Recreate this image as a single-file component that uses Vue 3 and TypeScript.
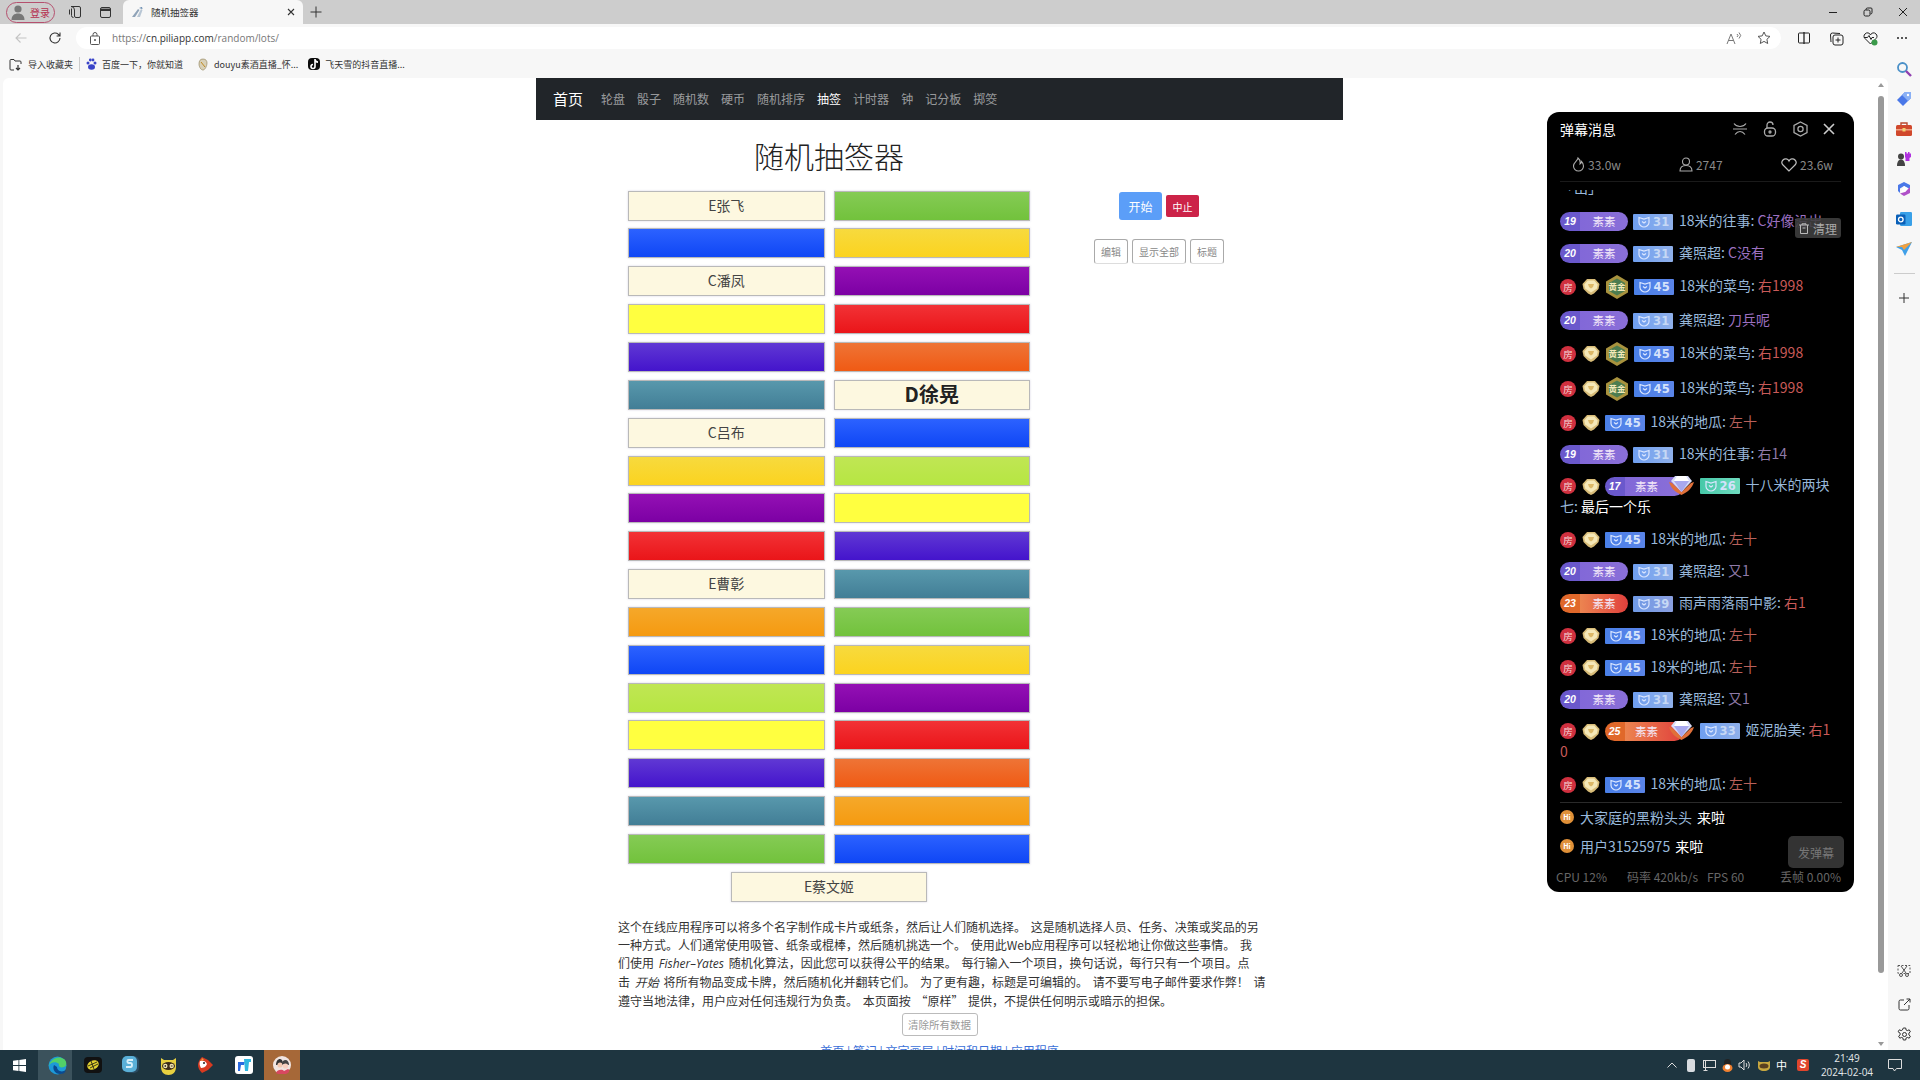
<script setup lang="ts">
type Col = 'cream' | 'green' | 'blue' | 'gold' | 'purple' | 'yellow' | 'red' | 'indigo' | 'orange' | 'teal' | 'lime' | 'amber'
interface Card { c: Col; t?: string; big?: boolean }
const c = (x: Col, t?: string, big?: boolean): Card => ({ c: x, t, big })
const cards: Card[] = [
  c('cream', 'E张飞'), c('green'), c('blue'), c('gold'), c('cream', 'C潘凤'), c('purple'),
  c('yellow'), c('red'), c('indigo'), c('orange'), c('teal'), c('cream', 'D徐晃', true),
  c('cream', 'C吕布'), c('blue'), c('gold'), c('lime'), c('purple'), c('yellow'),
  c('red'), c('indigo'), c('cream', 'E曹彰'), c('teal'), c('amber'), c('green'),
  c('blue'), c('gold'), c('lime'), c('purple'), c('yellow'), c('red'),
  c('indigo'), c('orange'), c('teal'), c('amber'), c('green'), c('blue')
]
const navLinks = ['轮盘', '骰子', '随机数', '硬币', '随机排序', '抽签', '计时器', '钟', '记分板', '掷筊']

interface Row {
  h: number; room?: boolean; medal?: boolean; lvl?: string; hot?: boolean; gem?: boolean
  fan: string; fanCls: string; name: string; msg: string; msgCls: string; two?: boolean
}
const suSu = (lvl: string, fan: string, name: string, msg: string, msgCls: string, hot = false): Row =>
  ({ h: 32, lvl, fan, fanCls: hot ? 'f-mid' : 'f-light', name, msg, msgCls, hot })
const caiNiao = (): Row =>
  ({ h: 35, room: true, medal: true, fan: '45', fanCls: 'f-deep', name: '18米的菜鸟', msg: '右1998', msgCls: 'm-red' })
const diGua = (): Row =>
  ({ h: 32, room: true, fan: '45', fanCls: 'f-deep', name: '18米的地瓜', msg: '左十', msgCls: 'm-rust' })
const rows: Row[] = [
  suSu('19', '31', '18米的往事', 'C好像没出', 'm-purple'),
  suSu('20', '31', '龚照超', 'C没有', 'm-purple'),
  caiNiao(),
  suSu('20', '31', '龚照超', '刀兵呢', 'm-purple'),
  caiNiao(),
  caiNiao(),
  diGua(),
  suSu('19', '31', '18米的往事', '右14', 'm-mauve'),
  { h: 53, two: true, room: true, lvl: '17', gem: true, fan: '26', fanCls: 'f-teal', name: '十八米的两块七', msg: '最后一个乐', msgCls: 'm-white' },
  diGua(),
  suSu('20', '31', '龚照超', '又1', 'm-mauve'),
  suSu('23', '39', '雨声雨落雨中影', '右1', 'm-red', true),
  diGua(),
  diGua(),
  suSu('20', '31', '龚照超', '又1', 'm-mauve'),
  { h: 53, two: true, room: true, lvl: '25', hot: true, gem: true, fan: '33', fanCls: 'f-light', name: '姬泥胎美', msg: '右10', msgCls: 'm-red' },
  diGua()
]
const sideTop = ['search', 'tag', 'box', 'chess', 'copilot', 'outlook', 'send']
</script>

<template>
  <div class="screen">
    <div class="tabbar">
      <div class="profile">
        <svg width="16" height="16" viewBox="0 0 16 16"><circle cx="8" cy="5" r="3.6" fill="#777"/><path d="M1.5 16c0-4.5 3-6.5 6.5-6.5s6.500 2 6.500 6.500z" fill="#777"/></svg>
        <span>登录</span>
      </div>
      <svg class="tb-ic1" width="14" height="14" viewBox="0 0 14 14" fill="none" stroke="#333"><path d="M5 1.500h6a1.500 1.500 0 0 1 1.500 1.500v8a1.500 1.500 0 0 1-1.500 1.500H8a1.500 1.500 0 0 1-1.500-1.500V5A3.500 3.500 0 0 0 3 1.500z"/><path d="M3.500 3.500v7a2 2 0 0 0 2 2M1.500 4.500v5"/></svg>
      <svg class="tb-ic2" width="13" height="13" viewBox="0 0 13 13" fill="none" stroke="#333"><rect x="1.500" y="1.500" width="10" height="10" rx="1.500"/><path d="M1.500 3.800h10" stroke-width="2.400"/></svg>
      <div class="tab">
        <svg width="13" height="13" viewBox="0 0 13 13"><path d="M1 11 7 3l1.500 1L4 11z" fill="#8fa3b8"/><path d="M6 11l4-8 1.500 1L9 11z" fill="#b8c6d4"/><path d="M8 2l3-1 .5 2z" fill="#5a80a8"/></svg>
        <span class="tab-title">随机抽签器</span>
        <svg class="tab-x" width="8" height="8" viewBox="0 0 8 8" stroke="#333" stroke-width="1.100"><path d="M1 1l6 6M7 1 1 7"/></svg>
      </div>
      <svg class="tab-plus" width="12" height="12" viewBox="0 0 12 12" stroke="#333"><path d="M6 .5v11M.5 6h11"/></svg>
      <div class="winctl">
        <svg width="10" height="10" viewBox="0 0 10 10" stroke="#222"><path d="M1 5.500h8"/></svg>
        <svg width="10" height="10" viewBox="0 0 10 10" stroke="#222" fill="none"><rect x="1" y="3" width="6" height="6" rx="1.500"/><path d="M3 3V2.500A1.500 1.500 0 0 1 4.500 1H8a1 1 0 0 1 1 1v3.500A1.500 1.500 0 0 1 7.500 7"/></svg>
        <svg width="10" height="10" viewBox="0 0 10 10" stroke="#222"><path d="M1 1l8 8M9 1 1 9"/></svg>
      </div>
    </div>

    <div class="toolbar">
      <svg class="t-back" width="12" height="12" viewBox="0 0 12 12" fill="none" stroke="#c4c4c4" stroke-width="1.100"><path d="M11.500 6H1M5.500 1.500 1 6l4.500 4.500"/></svg>
      <svg class="t-reload" width="14" height="14" viewBox="0 0 14 14" fill="none" stroke="#333" stroke-width="1.100"><path d="M12 7a5 5 0 1 1-1.600-3.700L12 5M12 1.500V5H8.600"/></svg>
      <div class="address">
        <svg width="10" height="13" viewBox="0 0 10 13" fill="none" stroke="#555"><rect x=".5" y="4" width="9" height="8.500" rx="1"/><path d="M3 4V2.500a2 2 0 0 1 4 0V4"/><circle cx="5" cy="8" r=".6" fill="#555"/></svg>
        <span class="url"><i>https://</i>cn.piliapp.com<i>/random/lots/</i></span>
        <svg class="a-read" width="16" height="13" viewBox="0 0 16 13" fill="none" stroke="#777"><path d="M1 12 5 2l4 10M2.500 8.500h5M11 2l1 1.500-1 1.500M13 .5l1.700 3-1.700 3"/></svg>
        <svg class="a-star" width="14" height="14" viewBox="0 0 14 14" fill="none" stroke="#555"><path d="M7 1l1.800 3.900 4.200.5-3.100 2.900.8 4.200L7 10.400l-3.700 2.100.8-4.200L1 5.400l4.200-.5z"/></svg>
      </div>
      <div class="t-right">
        <svg width="14" height="14" viewBox="0 0 14 14" fill="none" stroke="#222"><rect x="1.500" y="2" width="11" height="10" rx="1"/><path d="M7 1v12" stroke-width="1.300"/></svg>
        <svg width="15" height="15" viewBox="0 0 15 15" fill="none" stroke="#222"><rect x="4" y="4" width="10" height="10" rx="2"/><path d="M9 6.500v5M6.500 9h5M11 2.500 3.500 2A2 2 0 0 0 1.500 4l.5 7"/></svg>
        <svg width="15" height="15" viewBox="0 0 15 15" fill="none" stroke="#222"><path d="M7.500 13 2 7.500a3 3 0 0 1 0-4.500 3.200 3.200 0 0 1 5.500 1 3.200 3.200 0 0 1 5.500-1 3 3 0 0 1 0 4.500z"/><path d="M1 6.500h3.500l1.500-2 2 4 1-2h2"/><circle cx="11.500" cy="11.500" r="3" fill="#3a9a4a" stroke="none"/></svg>
        <svg width="12" height="12" viewBox="0 0 12 12" fill="#222"><circle cx="2" cy="6" r="1"/><circle cx="6" cy="6" r="1"/><circle cx="10" cy="6" r="1"/></svg>
      </div>
    </div>

    <div class="body">
      <div class="left">
        <div class="bookmarks">
          <svg class="bm-first" width="14" height="13" viewBox="0 0 14 13" fill="none" stroke="#333"><path d="M5 12H2a1 1 0 0 1-1-1V2.500a1 1 0 0 1 1-1h3l1 1.500h5a1 1 0 0 1 1 1V6"/><path d="M9 7v5M7 10l2 2 2-2" stroke-width="1.200"/></svg>
          <span class="bm-t">导入收藏夹</span>
          <i class="bm-sep"></i>
          <svg width="11" height="12" viewBox="0 0 11 12" fill="#3a44c8"><circle cx="2" cy="5" r="1.500"/><circle cx="4.300" cy="2" r="1.400"/><circle cx="7" cy="2" r="1.400"/><circle cx="9" cy="5" r="1.500"/><ellipse cx="5.500" cy="9" rx="3.500" ry="2.800"/></svg>
          <span class="bm-t">百度一下，你就知道</span>
          <svg class="bm-gap" width="12" height="13" viewBox="0 0 12 13"><path d="M6 1c3 0 4 2 4 4 0 3-2 7-4 7S2 9 2 6c0-3 1-5 4-5z" fill="#d8d0b8" stroke="#8a7a50" stroke-width=".6"/><path d="M4 4l4 5" stroke="#c08a20"/></svg>
          <span class="bm-t">douyu素酒直播_怀...</span>
          <span class="bm-tt"><svg width="9" height="11" viewBox="0 0 9 11" fill="none" stroke="#fff" stroke-width="1.600"><path d="M5 0v7.500a2 2 0 1 1-2-2M5 .5c.3 1.500 1.500 2.500 3 2.600"/></svg></span>
          <span class="bm-t">飞天雪的抖音直播...</span>
        </div>

        <div class="page">
          <div class="content">
            <nav class="navbar">
              <span class="brand">首页</span>
              <span v-for="n in navLinks" :key="n" class="nav-a" :class="{ active: n === '抽签' }">{{ n }}</span>
            </nav>
            <div class="board">
              <div class="lots-col">
                <h1 class="title">随机抽签器</h1>
                <div class="lots">
                  <div v-for="(k, i) in cards" :key="i" class="card" :class="[k.c, { big: k.big }]">{{ k.t }}</div>
                  <div class="card cream last">E蔡文姬</div>
                </div>
              </div>
              <div class="controls">
                <div class="ctl-a">
                  <button class="b-start">开始</button>
                  <button class="b-stop">中止</button>
                </div>
                <div class="ctl-b">
                  <button class="b-out w34">编辑</button>
                  <button class="b-out w54">显示全部</button>
                  <button class="b-out w34">标题</button>
                </div>
              </div>
            </div>
            <p class="desc">这个在线应用程序可以将多个名字制作成卡片或纸条，然后让人们随机选择。 这是随机选择人员、任务、决策或奖品的另<br>一种方式。人们通常使用吸管、纸条或棍棒，然后随机挑选一个。 使用此Web应用程序可以轻松地让你做这些事情。 我<br>们使用 <em>Fisher–Yates</em> 随机化算法，因此您可以获得公平的结果。 每行输入一个项目，换句话说，每行只有一个项目。点<br>击 <em>开始</em> 将所有物品变成卡牌，然后随机化并翻转它们。 为了更有趣，标题是可编辑的。 请不要写电子邮件要求作弊！ 请<br>遵守当地法律，用户应对任何违规行为负责。 本页面按 “原样” 提供，不提供任何明示或暗示的担保。</p>
            <div class="clear-wrap"><button class="b-clear">清除所有数据</button></div>
            <div class="foot-links">首页 | 笔记 | 文字画层 | 时间和日期 | 应用程序</div>
          </div>

          <div class="scrollbar">
            <i class="arrow up"></i>
            <i class="thumb"></i>
            <i class="arrow down"></i>
          </div>

          <aside class="panel">
            <div class="p-head">
              <span class="p-title">弹幕消息</span>
              <div class="p-tools">
                <svg width="16" height="14" viewBox="0 0 16 14" fill="none" stroke="#aaa" stroke-width="1.200"><path d="M2 1.500c1.500 2 3 3 6 3s4.500-1 6-3M1 7h14M3 12.500c1.500-2 3-3 5-3s3.500 1 5 3"/></svg>
                <svg width="14" height="16" viewBox="0 0 14 16" fill="none" stroke="#aaa" stroke-width="1.300"><rect x="1.500" y="7" width="11" height="8" rx="3.500"/><path d="M4 7V4a3 3 0 0 1 6 0"/><circle cx="7" cy="11" r="1"/></svg>
                <svg width="15" height="16" viewBox="0 0 15 16" fill="none" stroke="#aaa" stroke-width="1.300"><path d="M7.500 1 14 4.500v7L7.500 15 1 11.500v-7z"/><circle cx="7.500" cy="8" r="2.600"/></svg>
                <svg width="12" height="12" viewBox="0 0 12 12" stroke="#ccc" stroke-width="1.600"><path d="M1 1l10 10M11 1 1 11"/></svg>
              </div>
            </div>
            <div class="p-stats">
              <span class="stat s1"><svg width="13" height="15" viewBox="0 0 13 15" fill="none" stroke="#aaa" stroke-width="1.100"><path d="M6 1c0 2.500-4.500 4-4.500 8a5 5 0 0 0 10 0c0-2-1-3.500-2-4.500 0 1.500-.5 2-1.500 2.500C8.500 4.500 8 2.500 6 1z"/></svg>33.0w</span>
              <span class="stat s2"><svg width="14" height="15" viewBox="0 0 14 15" fill="none" stroke="#aaa" stroke-width="1.100"><circle cx="7" cy="4.500" r="3.500"/><path d="M1 14c0-3.500 2-5.500 6-5.500s6 2 6 5.500z"/></svg>2747</span>
              <span class="stat s3"><svg width="16" height="14" viewBox="0 0 16 14" fill="none" stroke="#bbb" stroke-width="1.200"><path d="M8 13 2 7a3.600 3.600 0 0 1 0-5 3.700 3.700 0 0 1 6 1 3.700 3.700 0 0 1 6-1 3.600 3.600 0 0 1 0 5z"/></svg>23.6w</span>
            </div>
            <div class="p-list">
              <div class="clip"><span class="name">「出」</span></div>
              <div v-for="(r, i) in rows" :key="i" class="row" :class="{ two: r.two }" :style="{ height: r.h + 'px', lineHeight: r.two ? '21px' : r.h + 'px' }">
                <span v-if="r.room" class="room">房</span>
                <svg v-if="r.room" class="coin" width="18" height="17" viewBox="0 0 18 17"><path d="M5 1h8l4.500 5-1 5L12 15.500 9 17l-3-1.500L1.500 11l-1-5z" fill="#d8bc78"/><path d="M5.800 2.500h6.400l3.500 4-.8 4L9 14.500 3.100 10.500l-.8-4z" fill="#f5e8b8"/><path d="M6 6h6l-1 3-2 1.500L7 9z" fill="#dcb868"/></svg>
                <svg v-if="r.medal" class="medal" width="24" height="24" viewBox="0 0 24 24"><path d="M12 0 23 6.500v11L12 24 1 17.500v-11z" fill="#a8923e"/><path d="M12 3.500 20 8v8l-8 4.500L4 16V8z" fill="#4c7c50"/><text x="12" y="15" text-anchor="middle" font-size="8.500" font-weight="700" fill="#f3e8b8" font-family="'Noto Sans CJK SC',sans-serif">黄金</text></svg>
                <span v-if="r.lvl" class="lvl-wrap" :class="{ gem: r.gem }">
                  <span class="lvl" :class="{ hot: r.hot }"><b>{{ r.lvl }}</b><span class="lvl-t">素素</span></span>
                  <svg v-if="r.gem" class="diamond" width="25" height="20" viewBox="0 0 25 20"><path d="M0 7c2 6 6 10 12.500 13C19 17 23 13 25 7l-3 1-9.500 9L3 8z" fill="#e0703a"/><path d="M6 1h13l4 5-10.500 11L2 6z" fill="#d8dcf8"/><path d="M8 1l-3 5h15l-3-5z" fill="#fff"/><path d="M5 6h15l-7.500 11z" fill="#a8a8ee"/></svg>
                </span>
                <span class="fan" :class="r.fanCls"><svg width="12" height="12" viewBox="0 0 12 12" fill="none" stroke="#dbe6ff" stroke-width="1.200"><path d="M1 1.500 6 3l5-1.500v5C11 9 8 11 6 11S1 9 1 6.500zM4 5.500l2 1.500 2-1.500"/></svg><b>{{ r.fan }}</b></span>
                <span class="name">{{ r.name }}: </span><span :class="r.msgCls">{{ r.msg }}</span>
              </div>
            </div>
            <div class="p-enter">
              <div class="enter"><i class="hi">Hi</i><span class="name">大家庭的黑粉头头</span><span class="come">来啦</span></div>
              <div class="enter"><i class="hi">Hi</i><span class="name">用户31525975</span><span class="come">来啦</span></div>
            </div>
            <div class="p-foot">
              <span>CPU 12%</span><span class="f2">码率 420kb/s</span><span class="f3">FPS 60</span><span class="f4">丢帧 0.00%</span>
            </div>
            <div class="clean">
              <svg width="10" height="11" viewBox="0 0 10 11" fill="none" stroke="#bbb"><path d="M0 2h10M3 2V.8h4V2M1.500 2v8.500h7V2"/><path d="M3.500 5h3"/></svg>
              清理
            </div>
            <div class="send">发弹幕</div>
          </aside>
        </div>
      </div>

      <div class="side">
        <div v-for="s in sideTop" :key="s" class="side-i">
          <svg v-if="s === 'search'" width="16" height="16" viewBox="0 0 16 16" fill="none"><circle cx="6.500" cy="6.500" r="4.500" stroke="#4a90c8" stroke-width="1.800"/><path d="M10 10l5 5" stroke="#9040b0" stroke-width="2.400"/></svg>
          <svg v-else-if="s === 'tag'" width="16" height="16" viewBox="0 0 16 16"><path d="M9 1h6v6l-8 8-6-6z" fill="#4a78e8"/><path d="M9 1h6v6l-3 3-6-6z" fill="#8ab0f5"/><circle cx="12" cy="4" r="1.200" fill="#fff"/></svg>
          <svg v-else-if="s === 'box'" width="16" height="14" viewBox="0 0 16 14"><path d="M5 3V1h6v2" fill="none" stroke="#b84a30" stroke-width="1.400"/><rect y="3" width="16" height="11" rx="1.500" fill="#d0482c"/><rect y="7" width="16" height="1.500" fill="#f0a080"/><rect x="6.500" y="6" width="3" height="3.500" fill="#f3d070"/></svg>
          <svg v-else-if="s === 'chess'" width="16" height="16" viewBox="0 0 16 16"><circle cx="5" cy="5.500" r="3" fill="#444"/><path d="M1 15c0-4 1.500-6.500 4-6.500S9 11 9 15z" fill="#444"/><path d="M9 1h1.500v1.500h1.500V1h1.500v1.500H15V1v5l-1.500 1v3h-4V7L9 6z" fill="#b030e0"/></svg>
          <svg v-else-if="s === 'copilot'" width="16" height="16" viewBox="0 0 16 16"><path d="M8 1 14 4v4L8 5 4 7.500V12L2 10V4z" fill="#4a78e8"/><path d="M14 6v6l-6 3-4-2.500 5-1.500 3-3z" fill="#b050c8"/><path d="M8 5l4 2.500-3 3.500H5z" fill="#fff"/></svg>
          <svg v-else-if="s === 'outlook'" width="16" height="16" viewBox="0 0 16 16"><rect x="4" y="1" width="12" height="14" rx="1.200" fill="#38a0e8"/><rect x="0" y="3.500" width="9.500" height="10" rx="1.200" fill="#0a60b8"/><circle cx="4.800" cy="8.500" r="2.300" fill="none" stroke="#fff" stroke-width="1.300"/></svg>
          <svg v-else width="16" height="14" viewBox="0 0 16 14"><path d="M0 5 16 0 9 14 6 8z" fill="#40a0e8"/><path d="M0 5h6l2 3 8-8z" fill="#f0a040"/></svg>
        </div>
        <i class="side-sep"></i>
        <svg class="side-plus" width="12" height="12" viewBox="0 0 12 12" stroke="#333"><path d="M6 1v10M1 6h10"/></svg>
        <div class="side-bottom">
          <svg class="snip" width="14" height="13" viewBox="0 0 14 13" fill="none" stroke="#555"><path d="M1 1.500h12v8H1z" stroke-dasharray="2 1.500"/><path d="M4 2l5 7M10 2 5 9"/><circle cx="4" cy="11" r="1.500"/><circle cx="10" cy="11" r="1.500"/></svg>
          <svg width="13" height="13" viewBox="0 0 13 13" fill="none" stroke="#333"><path d="M6 2H2.500A1.500 1.500 0 0 0 1 3.500v7A1.500 1.500 0 0 0 2.500 12h7a1.500 1.500 0 0 0 1.500-1.500V7M6 7l6-6M8.500 1H12v3.500"/></svg>
          <svg width="15" height="15" viewBox="0 0 15 15" fill="none" stroke="#333"><path d="M6.300 1h2.400l.4 2 1.200.6 1.900-.8 1.200 2-1.500 1.300v1.800l1.500 1.300-1.200 2-1.900-.8-1.200.6-.4 2H6.300l-.4-2-1.200-.6-1.900.8-1.200-2 1.500-1.300V6.100L1.100 4.800l1.200-2 1.900.8 1.200-.6z"/><circle cx="7.500" cy="7.500" r="2"/></svg>
        </div>
      </div>
    </div>

    <div class="taskbar">
      <div class="tk win"><svg width="13" height="13" viewBox="0 0 13 13" fill="#fff"><path d="M0 1.800 5.500 1v5H0zM6.300.9 13 0v6H6.300zM0 7h5.500v5L0 11.200zM6.300 7H13v6l-6.700-.9z"/></svg></div>
      <div class="tk edge"><svg width="19" height="19" viewBox="0 0 19 19"><circle cx="9.500" cy="9.500" r="9" fill="#1d9ad8"/><path d="M1 10C2 3 10-1 16 3c3 2 3 7 0 8-3 1-6 0-5-3C8 5 2 6 1 10z" fill="#52d068"/><path d="M6 9c-2 4 1 9 6 9 3 0 5-1 6-4-4 3-9 1-9-3z" fill="#0a4a90"/></svg></div>
      <div class="tk after-edge"><svg width="18" height="16" viewBox="0 0 18 16"><rect width="18" height="16" rx="4" fill="#111"/><ellipse cx="9" cy="8" rx="6" ry="4.500" fill="#e0d030" transform="rotate(-25 9 8)"/><path d="M4 9l9-4M6 11l8-4M7 4l3 8" stroke="#111" stroke-width=".8"/></svg></div>
      <div class="tk"><svg width="18" height="18" viewBox="0 0 18 18"><rect x="2" width="15" height="17" rx="5" fill="#2a4a60"/><rect width="15" height="16" rx="5" fill="#5ab0d8"/><path d="M11 4H6.500C5 4 5 7 6.500 7h2c2 0 2 4 0 4H4" fill="none" stroke="#d8f0fa" stroke-width="1.900"/></svg></div>
      <div class="tk"><svg width="19" height="19" viewBox="0 0 19 19"><path d="M2 2l3 2h9l3-2v9c0 5-3 8-7.500 8S2 16 2 11z" fill="#e8d040"/><ellipse cx="9.500" cy="10" rx="6.500" ry="4" fill="#3a2a1a"/><circle cx="6.300" cy="10" r="2.200" fill="#f3e6b0"/><circle cx="12.700" cy="10" r="2.200" fill="#f3e6b0"/><circle cx="6.300" cy="10" r=".9" fill="#333"/><path d="M11.800 10h1.800" stroke="#333"/></svg></div>
      <div class="tk"><svg width="17" height="18" viewBox="0 0 17 18"><path d="M5 1l6 3 5 5-5 5-6 3C2 14 1 11 1 9s1-5 4-8z" fill="#d83a20"/><path d="M3 5c3-1 6 0 7 3-1 3-4 4-6 4-1-2-2-4-1-7z" fill="#fff"/><circle cx="7" cy="7" r="1" fill="#222"/><path d="M5 2l2 2-3 1z" fill="#e8a040"/></svg></div>
      <div class="tk"><svg width="18" height="18" viewBox="0 0 18 18"><rect width="18" height="18" rx="3" fill="#fff"/><path d="M3 6h7l-1 3H6l-1 6H3z" fill="#2a6ae0"/><path d="M9 3h7v3h-2l-1 9h-3z" fill="#30b8e0"/></svg></div>
      <div class="tk active"><svg width="18" height="18" viewBox="0 0 18 18"><circle cx="9" cy="9" r="9" fill="#f0e4e0"/><path d="M3 9c0-4 2-6 4-6s3 2 3 6z" fill="#333"/><circle cx="7" cy="9" r="2.600" fill="#f3c8b0"/><path d="M9 8c0-3 1.500-4 3.500-4S16 6 16 9z" fill="#444"/><circle cx="12.500" cy="10" r="2.600" fill="#f7d0c0"/><path d="M3 17c1-4 7-4 8-2l4-2c2 1 1 3 0 4-3 2-9 2-12 0z" fill="#d84860"/></svg></div>
      <div class="tray">
        <svg class="y1" width="10" height="6" viewBox="0 0 10 6" fill="none" stroke="#ddd"><path d="M.5 5.500 5 1l4.500 4.500"/></svg>
        <svg class="y2" width="8" height="13" viewBox="0 0 8 13"><rect width="8" height="13" rx="2" fill="#d8dce0"/></svg>
        <svg class="y3" width="13" height="12" viewBox="0 0 13 12" fill="none" stroke="#ddd"><rect x=".5" y="1.500" width="12" height="7"/><path d="M2.500 1.500v10M.5 11.500h4"/></svg>
        <svg class="y4" width="11" height="13" viewBox="0 0 11 13"><ellipse cx="5.500" cy="4" rx="3.500" ry="4" fill="#222"/><ellipse cx="5.500" cy="9" rx="5" ry="4" fill="#f08030"/><ellipse cx="5.500" cy="8" rx="2.500" ry="2.500" fill="#fff"/></svg>
        <svg class="y5" width="13" height="12" viewBox="0 0 13 12" fill="none" stroke="#ddd"><path d="M1 4h2l3-3v10L3 8H1zM8 4c1 1 1 3 0 4M10 2.500c1.700 2 1.700 5 0 7"/></svg>
        <svg class="y6" width="14" height="12" viewBox="0 0 14 12"><path d="M1 2l2 1h8l2-1v6c0 2-2 4-6 4S1 10 1 8z" fill="#c8a840"/><ellipse cx="7" cy="7" rx="4.500" ry="2.500" fill="#5a4020"/></svg>
        <span class="zh">中</span>
        <span class="sogou">S</span>
        <div class="clock"><span>21:49</span><span>2024-02-04</span></div>
        <svg class="notif" width="14" height="13" viewBox="0 0 14 13" fill="none" stroke="#ddd"><path d="M.5.500h13v9H8.500L6.500 12 5 9.500H.5z"/></svg>
      </div>
    </div>
  </div>
</template>

<style scoped>
.screen { width: 1920px; height: 1080px; display: flex; flex-direction: column; overflow: hidden; background: #f7f7f7; font-family: "Noto Sans CJK SC", "Liberation Sans", sans-serif; color: #333; }
button { font-family: inherit; cursor: pointer; }
i { font-style: normal; }

.tabbar { height: 24px; flex: none; background: #cdcdcd; display: flex; align-items: center; }
.profile { width: 49px; height: 21px; margin-left: 6px; box-sizing: border-box; border: 1px solid #b5506e; border-radius: 11px; display: flex; align-items: center; gap: 4px; padding-left: 3px; font-size: 10px; color: #b5304f; }
.tb-ic1 { margin-left: 13px; }
.tb-ic2 { margin-left: 17px; }
.tab { width: 180px; height: 24px; margin-left: 11px; background: #f7f7f7; border-radius: 6px 6px 0 0; display: flex; align-items: center; padding-left: 8px; box-sizing: border-box; }
.tab-title { font-size: 9.500px; margin-left: 7px; color: #333; flex: 1; }
.tab-x { margin-right: 8px; }
.tab-plus { margin-left: 7px; }
.winctl { margin-left: auto; width: 80px; margin-right: 12px; display: flex; justify-content: space-between; }

.toolbar { height: 26px; flex: none; display: flex; align-items: center; padding-top: 2px; box-sizing: border-box; }
.t-back { margin-left: 15px; }
.t-reload { margin-left: 21px; }
.address { width: 1705px; height: 22px; margin-left: 14px; background: #fff; border-radius: 11px; display: flex; align-items: center; padding-left: 14px; box-sizing: border-box; }
.url { font-size: 10px; margin-left: 12px; color: #333; font-family: "Open Sans", "Noto Sans", sans-serif; flex: 1; }
.url i { color: #777; }
.a-read { margin-right: 15px; }
.a-star { margin-right: 10px; }
.t-right { flex: 1; display: flex; align-items: center; padding: 0 12px 0 16px; justify-content: space-between; }

.body { flex: 1; display: flex; min-height: 0; }
.left { width: 1888px; display: flex; flex-direction: column; min-width: 0; }
.bookmarks { height: 28px; flex: none; display: flex; align-items: center; padding-left: 9px; }
.bm-t { font-size: 9px; color: #333; margin-left: 5px; white-space: nowrap; }
.bm-sep { width: 1px; height: 14px; background: #ccc; margin: 0 6px; }
.bm-gap { margin-left: 14px; }
.bm-tt { width: 12px; height: 12px; border-radius: 4px; background: #0c0c0c; margin-left: 10px; display: flex; align-items: center; justify-content: center; }

.page { flex: 1; margin-left: 3px; background: #fff; border-radius: 6px 6px 0 0; position: relative; overflow: hidden; }
.content { width: 807px; margin-left: 533px; }
.navbar { height: 42px; background: #212529; display: flex; align-items: center; padding: 0 0 1px 17px; box-sizing: border-box; gap: 12px; font-size: 12px; }
.brand { font-size: 15px; color: #fff; margin-right: 6px; }
.nav-a { color: rgba(255, 255, 255, .55); }
.nav-a.active { color: #fff; }
.board { display: flex; padding-left: 92px; }
.lots-col { width: 402px; }
.title { font-size: 30px; font-weight: 300; line-height: 36px; margin: 17px 0 17.600px; text-align: center; color: #222; }
.lots { display: grid; grid-template-columns: 196.500px 196.500px; column-gap: 9px; grid-auto-rows: 30px; row-gap: 7.850px; }
.card { box-sizing: border-box; border: 1.500px solid #b9b9b9; padding-bottom: 2px; display: flex; align-items: center; justify-content: center; font-size: 14px; color: #444; box-shadow: 0 0 2px rgba(120, 110, 160, .3); }
.card.last { grid-column: 1 / span 2; width: 196.500px; justify-self: center; }
.card.big { font-size: 20px; font-weight: 700; color: #222; }
.cream { background: #fdf8e0; }
.green { background: linear-gradient(#85cb55, #72c23c); }
.blue { background: linear-gradient(#2c62ff, #0f46f5); }
.gold { background: linear-gradient(#f7da3e, #fbd31f); }
.purple { background: linear-gradient(#9410b4, #7c00a4); }
.yellow { background: #ffff40; }
.red { background: linear-gradient(#f23236, #ea1519); }
.indigo { background: linear-gradient(#6038d4, #4414cc); }
.orange { background: linear-gradient(#ee7436, #f05a14); }
.teal { background: linear-gradient(#5898ac, #427e96); }
.lime { background: linear-gradient(#c0e654, #b6e642); }
.amber { background: linear-gradient(#f5a82a, #f59a10); }
.controls { width: 130px; margin-left: 64px; padding-top: 72px; }
.ctl-a { display: flex; justify-content: center; align-items: center; gap: 4px; }
.b-start { width: 43px; height: 28px; border: 0; border-radius: 3px; background: #5b9ef8; color: #fff; font-size: 12px; padding: 0; }
.b-stop { width: 33px; height: 22px; border: 0; border-radius: 2px; background: #cc2348; color: #fff; font-size: 10px; padding: 0; }
.ctl-b { display: flex; justify-content: center; gap: 4px; margin-top: 19px; }
.b-out { height: 25px; padding: 0; background: #fff; border: 1px solid #aaa; border-bottom-color: #ddd; border-radius: 3px; font-size: 10px; color: #888; }
.w34 { width: 34px; }
.w54 { width: 54px; }
.desc { width: 645px; margin: 16px auto 0; padding-left: 1px; box-sizing: border-box; font-size: 12px; line-height: 18px; color: #333; word-spacing: 2px; white-space: nowrap; }
.desc em { font-family: "Open Sans", "Noto Sans CJK SC", sans-serif; }
.clear-wrap { display: flex; justify-content: center; margin-top: 3px; }
.b-clear { width: 76px; height: 23px; padding: 0; background: #fff; border: 1px solid #bbb; border-radius: 3px; font-size: 10.500px; color: #999; }
.foot-links { text-align: center; font-size: 12px; line-height: 18px; margin-top: 6px; color: #3a6fd8; }

.scrollbar { position: absolute; right: 0; top: 0; bottom: 0; width: 10px; }
.thumb { position: absolute; left: 0; width: 6px; top: 18px; height: 877px; background: #999; border-radius: 3px; }
.arrow { position: absolute; left: 0; width: 0; height: 0; border: 3px solid transparent; }
.arrow.up { top: 5px; border-bottom: 4px solid #999; border-top: 0; }
.arrow.down { bottom: 4px; border-top: 4px solid #999; border-bottom: 0; }

.panel { position: absolute; left: 1544px; top: 34px; width: 307px; height: 780px; background: #000; border-radius: 12px; box-sizing: border-box; padding: 0 13px; display: flex; flex-direction: column; color: #aaa; }
.p-head { height: 36px; flex: none; display: flex; align-items: center; justify-content: space-between; padding-bottom: 3px; box-sizing: border-box; }
.p-title { font-size: 14px; color: #fff; }
.p-tools { display: flex; align-items: center; width: 103px; justify-content: space-between; margin-right: 6px; }
.p-stats { height: 33px; flex: none; border-bottom: 1px solid #1a1a1a; display: flex; align-items: center; font-size: 12px; color: #8a8a8a; }
.stat { display: flex; align-items: center; gap: 3px; }
.s1 { margin-left: 12px; }
.s2 { margin-left: 58px; }
.s3 { margin-left: auto; margin-right: 8px; }
.p-list { height: 612px; margin-top: 8px; width: 273px; flex: none; overflow: hidden; font-size: 14px; word-break: break-all; }
.clip { height: 13.500px; line-height: 21px; display: flow-root; }
.clip .name { display: block; margin-top: -13px; }
.row.two { padding-top: 5.500px; box-sizing: border-box; }
.row svg, .room, .fan, .lvl-wrap { vertical-align: middle; }
.name { color: #98b8da; }
.room { display: inline-block; width: 16px; height: 16px; line-height: 16px; border-radius: 50%; background: #d0303f; color: #f5d8d8; font-size: 9.500px; text-align: center; margin-right: 5.500px; }
.coin { margin-right: 5px; }
.medal { margin-right: 5px; }
.lvl-wrap { display: inline-block; position: relative; height: 19px; width: 68px; margin-right: 5px; }
.lvl-wrap.gem { width: 89px; margin-right: 6px; }
.lvl { position: absolute; left: 0; top: 0; width: 68px; height: 19px; border-radius: 10px; background: linear-gradient(90deg, #6a58cc 0 20px, #8268d8 20px, #8a6fd8 100%); display: flex; align-items: center; color: #fff; line-height: 19px; }
.gem .lvl { width: 79px; }
.lvl.hot { background: linear-gradient(90deg, #e0682a 0 20px, #ec8450 20px, #e0403c 100%); }
.lvl b { width: 20px; font-size: 10.500px; font-style: italic; text-align: center; font-family: "Liberation Sans", sans-serif; }
.lvl-t { width: 48px; text-align: center; font-size: 11.500px; color: #f3e8f8; }
.gem .lvl-t { width: 44px; }
.diamond { position: absolute; right: 0; top: -2px; }
.fan { display: inline-flex; align-items: center; width: 40px; height: 16px; box-sizing: border-box; padding-left: 5px; gap: 3px; border-radius: 1px; margin-right: 6px; line-height: 16px; }
.fan b { font-size: 11.500px; font-family: "DejaVu Sans", sans-serif; font-weight: 700; color: #d4e2fb; letter-spacing: .3px; }
.f-light b, .f-mid b { color: #c6d8f5; }
.f-light { background: linear-gradient(90deg, #6f9ff0, #8fb0ea); }
.f-mid { background: linear-gradient(90deg, #6f9ae6, #8a9fe0); }
.f-deep { background: linear-gradient(90deg, #4a80e8, #5a84e8); }
.f-teal { background: linear-gradient(90deg, #46c8a8, #70dcc0); }
.m-purple { color: #9c70c0; }
.m-mauve { color: #8f7aa8; }
.m-red { color: #c85a58; }
.m-rust { color: #b8605a; }
.m-white { color: #fff; }
.p-enter { border-top: 1px solid #2a2a2a; width: 282px; flex: none; font-size: 14px; }
.enter { height: 29px; display: flex; align-items: center; }
.enter:first-child { margin-top: -1px; }
.hi { width: 14px; height: 14px; border-radius: 50%; background: #e09038; color: #fff; font-size: 7px; font-weight: 700; text-align: center; line-height: 14px; margin-right: 6px; }
.come { color: #fff; margin-left: 5px; }
.p-foot { display: flex; font-size: 12px; line-height: 18px; color: #666; margin: 8px 0 0 -4px; width: 285px; flex: none; white-space: nowrap; }
.f2 { margin-left: 20px; }
.f3 { margin-left: 9px; }
.f4 { margin-left: auto; }
.clean { position: absolute; left: 248px; top: 106px; width: 46px; height: 20px; background: rgba(62, 62, 62, .9); border-radius: 3px; font-size: 12px; color: #aaa; display: flex; align-items: center; justify-content: center; gap: 4px; }
.send { position: absolute; left: 241px; top: 724px; width: 56px; height: 32px; border-radius: 5px; background: #333; color: #777; font-size: 12px; display: flex; align-items: center; justify-content: center; }

.side { width: 32px; flex: none; display: flex; flex-direction: column; align-items: center; padding-top: 4px; box-sizing: border-box; }
.side-i { height: 30px; width: 100%; display: flex; align-items: center; justify-content: center; }
.side-sep { width: 21px; height: 1px; background: #ccc; margin-top: 9px; }
.side-plus { margin-top: 18px; }
.side-bottom { margin-top: auto; padding-bottom: 8px; display: flex; flex-direction: column; align-items: center; gap: 16px; }
.snip { margin-bottom: 5px; }

.taskbar { height: 30px; flex: none; background: #1e3540; display: flex; align-items: stretch; }
.tk { width: 37.700px; display: flex; align-items: center; justify-content: center; }
.tk.win { width: 38px; }
.tk.edge { width: 34px; background: #3b525c; padding-left: 4px; box-sizing: border-box; }
.tk.after-edge { margin-left: 2px; }
.tk.active { width: 36px; background: #a66838; margin-left: 1.500px; }
.tray { margin-left: auto; display: flex; align-items: center; color: #e8e8e8; }
.y1 { margin-right: 1px; }
.y2 { margin-left: 9px; }
.y3 { margin-left: 8px; }
.y4 { margin-left: 6px; }
.y5 { margin-left: 5px; }
.y6 { margin-left: 6px; }
.zh { font-size: 11px; margin-left: 5px; color: #fff; }
.sogou { width: 12px; height: 12px; background: #e0452c; border-radius: 2px; font: italic 700 10px/12px "Liberation Sans", sans-serif; color: #fff; text-align: center; margin-left: 10px; }
.clock { display: flex; flex-direction: column; align-items: center; margin-left: 8px; font-size: 10px; line-height: 14px; width: 60px; color: #e4e8ea; font-family: "Open Sans", sans-serif; }
.notif { margin-left: 11px; margin-right: 18px; }
</style>

<style>
html, body { margin: 0; background: #f7f7f7; overflow: hidden; }
</style>
